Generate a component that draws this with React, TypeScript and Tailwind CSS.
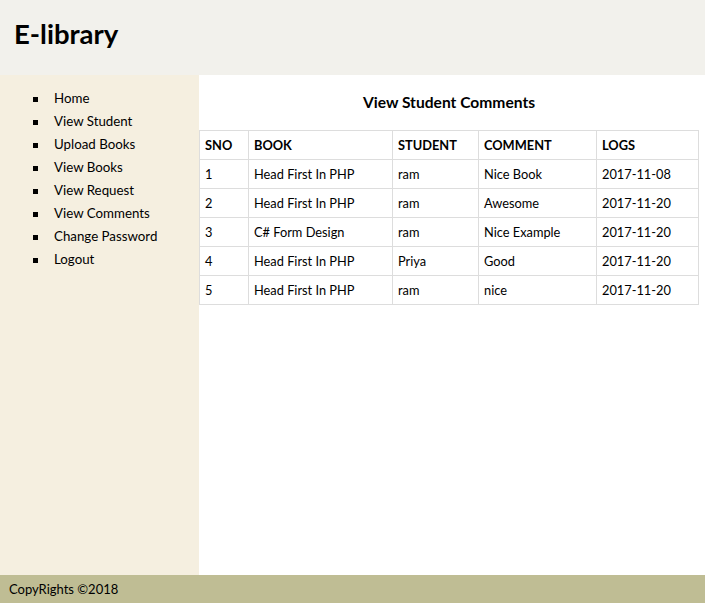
import React from "react";

const rows = [
  ["1", "Head First In PHP", "ram", "Nice Book", "2017-11-08"],
  ["2", "Head First In PHP", "ram", "Awesome", "2017-11-20"],
  ["3", "C# Form Design", "ram", "Nice Example", "2017-11-20"],
  ["4", "Head First In PHP", "Priya", "Good", "2017-11-20"],
  ["5", "Head First In PHP", "ram", "nice", "2017-11-20"],
];

const menu = [
  "Home",
  "View Student",
  "Upload Books",
  "View Books",
  "View Request",
  "View Comments",
  "Change Password",
  "Logout",
];

export default function App() {
  return (
    <div className="w-[705px] text-black" style={{ fontFamily: "Lato, 'Liberation Sans', sans-serif" }}>
      <header className="h-[75px] bg-[#f2f1ec] flex items-center px-[14px]">
        <h1 className="text-[27.5px] font-bold leading-none mt-[-8px]">E-library</h1>
      </header>
      <div className="flex h-[500px]">
        <nav className="w-[199px] bg-[#f5efe0] pt-[12px]">
          <ul className="pl-[33px] text-[13.3px] leading-[23px]">
            {menu.map((m) => (
              <li key={m} className="flex items-center">
                <span className="w-[5px] h-[5px] bg-black mr-[16px] mt-[1px]" />
                <span>{m}</span>
              </li>
            ))}
          </ul>
        </nav>
        <main className="w-[500px]">
          <div className="text-center font-bold text-[15.6px] pt-[16px] h-[55px] leading-[22px]">View Student Comments</div>
          <table className="w-[500px] border-collapse text-[12.8px]">
            <thead>
              <tr className="h-[29px]">
                <th className="w-[49px] border border-[#dddddd] text-left font-bold pl-[5px] pt-[1px]">SNO</th>
                <th className="w-[144px] border border-[#dddddd] text-left font-bold pl-[5px] pt-[1px]">BOOK</th>
                <th className="w-[86px] border border-[#dddddd] text-left font-bold pl-[5px] pt-[1px]">STUDENT</th>
                <th className="w-[118px] border border-[#dddddd] text-left font-bold pl-[5px] pt-[1px]">COMMENT</th>
                <th className="border border-[#dddddd] text-left font-bold pl-[5px] pt-[1px]">LOGS</th>
              </tr>
            </thead>
            <tbody>
              {rows.map((r) => (
                <tr key={r[0]} className="h-[29px]">
                  {r.map((c, i) => (
                    <td key={i} className="border border-[#dddddd] pl-[5px] pt-[1px]">{c}</td>
                  ))}
                </tr>
              ))}
            </tbody>
          </table>
        </main>
      </div>
      <footer className="h-[28px] bg-[#bfbd94] flex items-center px-[9px] pt-[2px] text-[13px]">CopyRights ©2018</footer>
    </div>
  );
}
